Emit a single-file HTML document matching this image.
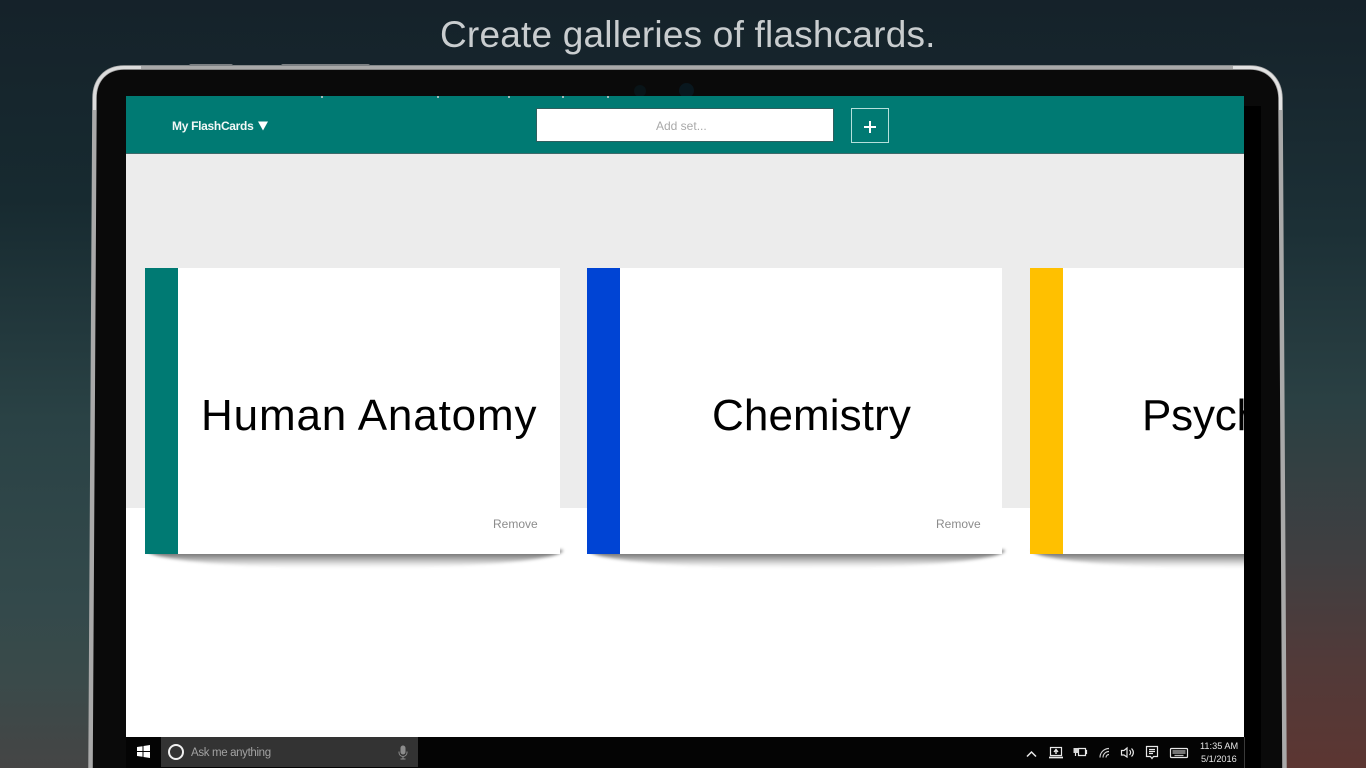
<!DOCTYPE html>
<html>
<head>
<meta charset="utf-8">
<style>
html,body{margin:0;padding:0;width:1366px;height:768px;overflow:hidden;background:#15232a;font-family:"Liberation Sans",sans-serif}
#root{position:relative;width:1366px;height:768px;overflow:hidden;contain:strict}
.a{position:absolute}
#bg{left:0;top:0;width:1366px;height:768px;background:linear-gradient(to bottom,#15222a 0,#172a30 200px,#2a4245 420px,#33494b 600px,#3a4a4a 680px,#454545 768px)}
#bgr{left:1240px;top:0;width:126px;height:768px;background:linear-gradient(to bottom,#15222a 0,#1c3036 230px,#2a4043 400px,#403f41 560px,#513a39 660px,#5c3632 768px)}
.t{white-space:nowrap;line-height:1}
.card{top:268px;width:415px;height:286px;background:#fff}
.bar{left:0;top:0;width:33px;height:286px}
.title{top:123px;font-size:44px;color:#000;white-space:nowrap;line-height:50px}
.rm{top:249px;font-size:12px;color:#8c8c8c;white-space:nowrap;line-height:14px}
.sh{height:18px;background:linear-gradient(to bottom,rgba(0,0,0,.6) 0,rgba(0,0,0,.5) 25%,rgba(0,0,0,.12) 75%,rgba(0,0,0,0) 100%);border-radius:0 0 50% 50%/0 0 100% 100%;filter:blur(1.5px)}
.dot{width:2px;height:2px;top:96px;background:#9fbdbb}
</style>
</head>
<body>
<div id="root">
<div class="a" id="bg"></div>
<div class="a" id="bgr"></div>
<div class="a t" style="left:440px;top:15px;font-size:37px;line-height:40px;color:#c9cdcf;letter-spacing:.2px">Create galleries of flashcards.</div>

<!-- device frame -->
<svg class="a" style="left:0;top:0" width="1366" height="768" viewBox="0 0 1366 768">
  <path d="M90.500 772L94.500 98C94.500 80 106 67.500 124 67.500H1250C1268 67.500 1280 80 1280.500 98L1284.500 772Z" fill="#0a0a0a" stroke="#a9a9a9" stroke-width="4.500"/>
  <path d="M94.500 110V98C94.500 80 106 67.500 124 67.500H141" fill="none" stroke="#dcdcdc" stroke-width="3"/>
  <path d="M1233 67.500H1250C1268 67.500 1280 80 1280.500 98V110" fill="none" stroke="#e2e2e2" stroke-width="3"/>
</svg>
<div class="a" style="left:189px;top:64px;width:44px;height:2px;background:#7d8184;border-radius:2px 2px 0 0"></div>
<div class="a" style="left:281px;top:64px;width:89px;height:2px;background:#7d8184;border-radius:2px 2px 0 0"></div>
<div class="a" style="left:1244px;top:106px;width:17px;height:662px;background:#000"></div>

<!-- camera dots -->
<div class="a" style="left:633px;top:85px;width:14px;height:11px;overflow:hidden"><div style="width:12px;height:12px;border-radius:50%;background:#091418;margin-left:1px"></div></div>
<div class="a" style="left:678px;top:83px;width:17px;height:13px;overflow:hidden"><div style="width:15px;height:15px;border-radius:50%;background:#09171e;margin-left:1px"></div></div>

<!-- screen -->
<div class="a" style="left:126px;top:96px;width:1118px;height:641px;background:#fff;overflow:hidden">
  <div class="a" style="left:0;top:0;width:1118px;height:57px;background:#007a73"></div>
  <div class="a" style="left:0;top:57px;width:1118px;height:1px;background:#3e6a6b"></div>
  <div class="a" style="left:0;top:58px;width:1118px;height:354px;background:#ececec"></div>
  <div class="a t" style="left:46px;top:23px;font-size:12px;line-height:14px;font-weight:bold;color:#f2f8f7;letter-spacing:-.3px">My FlashCards</div>
  <svg class="a" style="left:132px;top:25px" width="10" height="10" viewBox="0 0 10 10"><path d="M0 .5H10L5 9.500Z" fill="#fff"/></svg>
  <div class="a" style="left:410px;top:12px;width:298px;height:34px;box-sizing:border-box;background:#fff;border:1px solid #2f5f5f"></div>
  <div class="a t" style="left:530px;top:23px;font-size:12px;line-height:14px;color:#a9a9a9">Add set...</div>
  <div class="a" style="left:725px;top:12px;width:38px;height:35px;box-sizing:border-box;border:1px solid #b5e0dc"></div>
  <svg class="a" style="left:737px;top:24px" width="14" height="14" viewBox="0 0 14 14"><path d="M7 1V13M1 7H13" stroke="#fff" stroke-width="2" fill="none"/></svg>
</div>
<div class="a dot" style="left:321px"></div>
<div class="a dot" style="left:437px"></div>
<div class="a dot" style="left:508px"></div>
<div class="a dot" style="left:562px"></div>
<div class="a dot" style="left:607px"></div>

<!-- shadows -->
<div style="position:absolute;left:126px;top:500px;width:1118px;height:100px;overflow:hidden">
  <div class="a sh" style="left:21px;top:50px;width:416px"></div>
  <div class="a sh" style="left:463px;top:50px;width:416px"></div>
  <div class="a sh" style="left:906px;top:50px;width:416px"></div>
</div>

<!-- cards -->
<div class="a card" style="left:145px">
  <div class="a bar" style="background:#007a73"></div>
  <div class="a title" style="left:56px;letter-spacing:.85px">Human Anatomy</div>
  <div class="a rm" style="left:348px">Remove</div>
</div>
<div class="a card" style="left:587px">
  <div class="a bar" style="background:#0044d4"></div>
  <div class="a title" style="left:125px;letter-spacing:.1px">Chemistry</div>
  <div class="a rm" style="left:349px">Remove</div>
</div>
<div class="a" style="left:1030px;top:268px;width:214px;height:286px;background:#fff;overflow:hidden">
  <div class="a bar" style="background:#ffc000"></div>
  <div class="a title" style="left:112px;letter-spacing:-.2px">Psychology</div>
</div>

<!-- taskbar -->
<div class="a" style="left:126px;top:737px;width:1118px;height:31px;background:#040404"></div>
<svg class="a" style="left:137px;top:745px" width="13" height="13" viewBox="0 0 13 13"><path d="M0 2L5.500 1.200V6H0ZM6.500 1L13 0V6H6.500ZM0 7H5.500V11.800L0 11ZM6.500 7H13V13L6.500 12Z" fill="#fff"/></svg>
<div class="a" style="left:161px;top:737px;width:257px;height:30px;background:#333"></div>
<div class="a" style="left:168px;top:744px;width:16px;height:16px;box-sizing:border-box;border:2px solid #f0f0f0;border-radius:50%"></div>
<div class="a t" style="left:191px;top:746px;font-size:11.500px;line-height:14px;color:#a2a2a2;letter-spacing:-.35px">Ask me anything</div>
<svg class="a" style="left:397px;top:745px" width="12" height="15" viewBox="0 0 12 15"><rect x="3.500" y="0.500" width="5" height="9" rx="2.500" fill="#8c8c8c"/><path d="M2 6.500V7.500A4 4 0 0 0 10 7.500V6.500M6 11.500V14M3.500 14H8.500" stroke="#8c8c8c" fill="none"/></svg>

<svg class="a" style="left:1020px;top:737px" width="175" height="31" viewBox="0 0 175 31" fill="none" stroke="#e8e8e8" stroke-width="1.200">
  <path d="M7 19.500L11.500 15L16 19.500" stroke-width="1.500"/>
  <rect x="30.500" y="10.500" width="11" height="8"/><path d="M29 20.500H43" stroke-width="1.700"/><path d="M36 17V13M34 15L36 12.500L38 15" stroke-width="1.400"/>
  <path d="M58.500 11.500H65.500V18.500H58.500Z M65.500 13.500H66.500V16.500H65.500"/><rect x="53.500" y="11" width="5" height="5" fill="#d8d8d8" stroke="none"/><path d="M55.500 16V19"/>
  <path d="M80 20.500A9 9 0 0 1 89 11.500M83 20.500A6 6 0 0 1 89 14.500M86 20.500A3 3 0 0 1 89 17.500" stroke="#cfcfcf"/>
  <path d="M101.500 13.500H104L107 11V20L104 18H101.500ZM109.500 13C111 14.500 111 16.500 109.500 18M111.500 11.500C114 14 114 17 111.500 19.500"/>
  <path d="M126.500 9.500H137.500V19.500H133.500L132 21.500L130.500 19.500H126.500ZM129 12.500H135M129 14.500H135M129 16.500H133"/>
  <rect x="150.500" y="11.500" width="17" height="9" rx="1"/><path d="M152.500 14H165.500M152.500 16H165.500M154.500 18.500H163.500" stroke="#bbb"/>
</svg>
<div class="a t" style="left:1200px;top:740px;font-size:9.200px;line-height:12px;color:#e6e6e6">11:35 AM</div>
<div class="a t" style="left:1201px;top:753px;font-size:9.200px;line-height:12px;color:#e6e6e6">5/1/2016</div>
<div class="a" style="left:1244px;top:737px;width:1px;height:31px;background:#3a3a3a"></div>
</div>
</body>
</html>
